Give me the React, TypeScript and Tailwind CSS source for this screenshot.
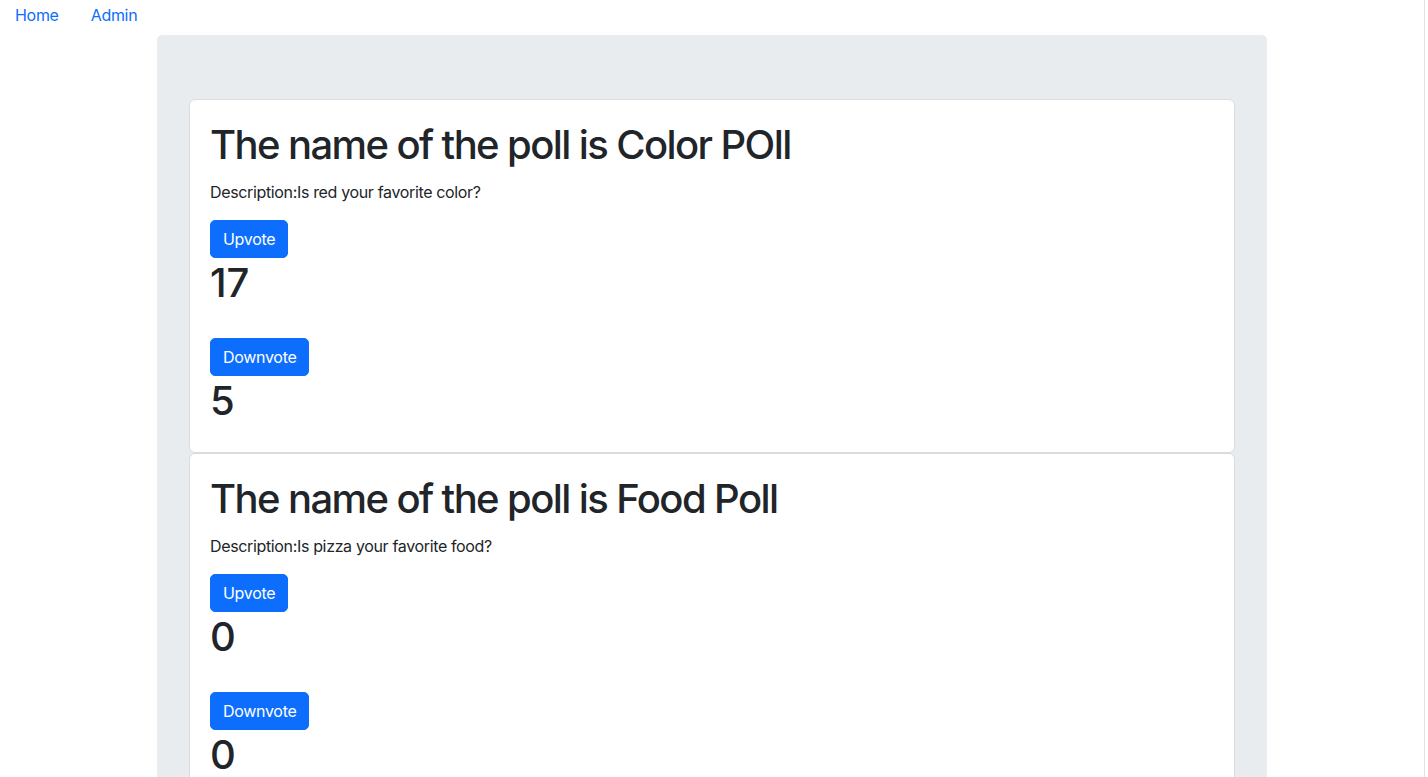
import React, { useState } from 'react';

interface Poll {
  id: number;
  name: string;
  description: string;
  upvotes: number;
  downvotes: number;
}

const POLLS: Poll[] = [
  { id: 1, name: 'Color POll', description: 'Is red your favorite color?', upvotes: 17, downvotes: 5 },
  { id: 2, name: 'Food Poll', description: 'Is pizza your favorite food?', upvotes: 0, downvotes: 0 },
];

const VoteButton: React.FC<{ label: string; onClick: () => void }> = ({ label, onClick }) => (
  <button
    onClick={onClick}
    className="block rounded-[5px] border border-[#0d6efd] bg-[#0d6efd] px-3 py-[6px] text-base leading-6 tracking-[-0.3px] text-white hover:bg-[#0b5ed7]"
  >
    {label}
  </button>
);

const PollCard: React.FC<{ poll: Poll }> = ({ poll }) => {
  const [up, setUp] = useState(poll.upvotes);
  const [down, setDown] = useState(poll.downvotes);

  return (
    <div className="rounded-[6px] border border-[#dcdcdc] bg-white px-5 pt-5 pb-4">
      <h1 className="mb-[10px] text-[40px] leading-[50px] font-medium tracking-[-1.6px]">
        The name of the poll is {poll.name}
      </h1>
      <p className="mb-4 text-base leading-6 tracking-[-0.35px]">Description:{poll.description}</p>
      <VoteButton label="Upvote" onClick={() => setUp(up + 1)} />
      <h1 className="mb-[30px] text-[40px] leading-[50px] font-medium">{up}</h1>
      <VoteButton label="Downvote" onClick={() => setDown(down + 1)} />
      <h1 className="mb-[10px] text-[40px] leading-[50px] font-medium">{down}</h1>
    </div>
  );
};

export default function App() {
  return (
    <div className="flex h-screen overflow-hidden bg-white font-['Inter','Liberation_Sans',sans-serif] text-[#212529]">
      <div className="flex-1">
        <nav className="flex h-[35px] pt-[3px] tracking-[-0.3px]">
          <a href="#" className="block px-4 leading-6 text-[#0d6efd] -ml-px">Home</a>
          <a href="#" className="block px-4 leading-6 text-[#0d6efd]">Admin</a>
        </nav>
        <div className="mx-auto w-[1110px] rounded-[5px] bg-[#e9ecef] px-8 pt-16 pb-8">
          {POLLS.map((p) => (
            <PollCard key={p.id} poll={p} />
          ))}
        </div>
      </div>
      <div className="w-[4px] border-l border-[#e3e3e3] bg-white" />
    </div>
  );
}
